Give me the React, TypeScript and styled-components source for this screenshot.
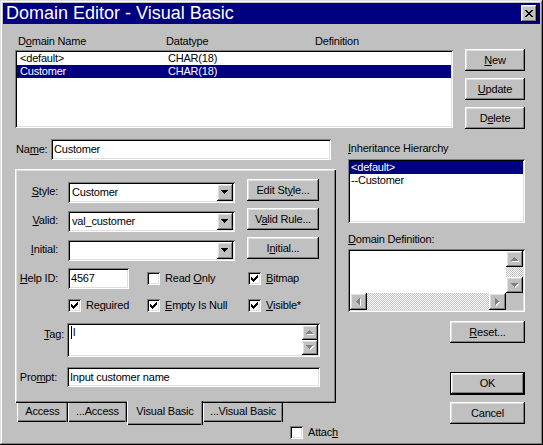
import React from 'react';
import styled, { createGlobalStyle, css } from 'styled-components';

const GlobalStyle = createGlobalStyle`
  html, body { margin: 0; padding: 0; background: #c0c0c0; }
  body {
    font-family: "Liberation Sans", Arial, sans-serif;
    font-size: 11px;
    letter-spacing: -0.2px;
    color: #000;
  }
  * { box-sizing: border-box; }
  u { text-decoration-thickness: 1px; text-underline-offset: 1px; }
`;

const raised = css`
  background: #c0c0c0;
  box-shadow: inset -1px -1px #000, inset 1px 1px #fff, inset -2px -2px #808080, inset 2px 2px #dfdfdf;
`;

const sunken = css`
  box-shadow: inset 1px 1px #808080, inset -1px -1px #fff, inset 2px 2px #000, inset -2px -2px #dfdfdf;
`;

const Window = styled.div`
  width: 543px;
  height: 445px;
  padding: 3px;
  background: #c0c0c0;
  box-shadow: inset -1px -1px #000, inset 1px 1px #dfdfdf, inset -2px -2px #808080, inset 2px 2px #fff;
  display: flex;
  flex-direction: column;
  overflow: hidden;
`;

const TitleBar = styled.div`
  height: 21px;
  flex: none;
  background: #000080;
  color: #fff;
  display: flex;
  align-items: center;
  padding: 0 3px;
  font-size: 18px;
  letter-spacing: 0;
  line-height: 21px;
  white-space: nowrap;
`;

const CloseBtn = styled.div`
  ${raised};
  margin-left: auto;
  width: 16px;
  height: 17px;
  display: flex;
  align-items: center;
  justify-content: center;
`;

const Body = styled.div`
  flex: 1;
  display: flex;
  flex-direction: column;
  padding: 11px 0 0 12px;
`;

const TopSection = styled.div`
  display: flex;
  gap: 12px;
`;

const ListColumn = styled.div`
  width: 438px;
  display: flex;
  flex-direction: column;
  gap: 2px;
`;

const columns = css`
  display: grid;
  grid-template-columns: 148px 149px 1fr;
  padding-left: 3px;
  height: 13px;
  line-height: 13px;
  white-space: nowrap;
`;

const HeaderRow = styled.div`
  ${columns};
`;

const ListBox = styled.div<{ $w: number; $h: number }>`
  ${sunken};
  width: ${p => p.$w}px;
  height: ${p => p.$h}px;
  background: #fff;
  padding: 2px;
  display: flex;
  flex-direction: column;
  flex: none;
`;

const DomainRow = styled.div<{ $selected?: boolean }>`
  ${columns};
  background: ${p => (p.$selected ? '#000080' : 'transparent')};
  color: ${p => (p.$selected ? '#fff' : '#000')};
`;

const TreeRow = styled.div<{ $selected?: boolean }>`
  height: 13px;
  line-height: 13px;
  padding-left: 1px;
  white-space: nowrap;
  background: ${p => (p.$selected ? '#000080' : 'transparent')};
  color: ${p => (p.$selected ? '#fff' : '#000')};
`;

const ButtonColumn = styled.div`
  padding-top: 14px;
  display: flex;
  flex-direction: column;
  gap: 7px;
`;

const Button = styled.button<{ $w: number; $h?: number; $default?: boolean; $ml?: number; $mt?: number }>`
  ${raised};
  width: ${p => p.$w}px;
  height: ${p => p.$h ?? 22}px;
  margin-left: ${p => p.$ml ?? 0}px;
  margin-top: ${p => p.$mt ?? 0}px;
  border: 0;
  padding: 0;
  font: inherit;
  letter-spacing: inherit;
  color: #000;
  line-height: 13px;
  flex: none;
  white-space: nowrap;
  ${p =>
    p.$default &&
    css`
      box-shadow: inset 0 0 0 1px #000, inset -2px -2px #000, inset 2px 2px #fff, inset -3px -3px #808080,
        inset 3px 3px #dfdfdf;
    `}
`;

const LowerSection = styled.div`
  margin-top: 10px;
  display: flex;
  gap: 12px;
`;

const LeftColumn = styled.div`
  width: 321px;
  display: flex;
  flex-direction: column;
`;

const RightColumn = styled.div`
  width: 177px;
  display: flex;
  flex-direction: column;
  align-items: flex-start;
  padding-top: 3px;
`;

const NameRow = styled.div`
  display: flex;
  align-items: center;
  height: 21px;
`;

const Label = styled.label<{ $w: number; $gap?: number; $left?: boolean; $top?: number }>`
  width: ${p => p.$w}px;
  margin-right: ${p => p.$gap ?? 0}px;
  text-align: ${p => (p.$left ? 'left' : 'right')};
  padding-left: ${p => (p.$left ? 1 : 0)}px;
  padding-top: ${p => p.$top ?? 0}px;
  flex: none;
  white-space: nowrap;
  line-height: 13px;
`;

const TextField = styled.div<{ $w: number; $h?: number }>`
  ${sunken};
  width: ${p => p.$w}px;
  height: ${p => p.$h ?? 21}px;
  line-height: ${p => (p.$h ?? 21) - 4}px;
  background: #fff;
  padding: 2px 2px 2px 3px;
  white-space: nowrap;
  overflow: hidden;
  flex: none;
`;

const Combo = styled.div`
  ${sunken};
  width: 167px;
  height: 21px;
  margin-top: 3px;
  background: #fff;
  padding: 2px;
  display: flex;
  flex: none;
`;

const ComboText = styled.span`
  flex: 1;
  padding-left: 2px;
  line-height: 17px;
  white-space: nowrap;
`;

const ScrollButton = styled.span<{ $w: number; $h: number }>`
  ${raised};
  width: ${p => p.$w}px;
  height: ${p => p.$h}px;
  display: flex;
  align-items: center;
  justify-content: center;
  flex: none;
`;

const Panel = styled.div`
  margin-top: 9px;
  height: 234px;
  background: #c0c0c0;
  box-shadow: inset 1px 1px #fff, inset -1px -1px #000, inset -2px -2px #808080, inset 2px 2px #dfdfdf;
  padding-top: 10px;
  display: flex;
  flex-direction: column;
`;

const FormRow = styled.div<{ $h: number; $mt?: number; $center?: boolean; $pl?: number }>`
  display: flex;
  align-items: ${p => (p.$center ? 'center' : 'flex-start')};
  height: ${p => p.$h}px;
  margin-top: ${p => p.$mt ?? 0}px;
  padding-left: ${p => p.$pl ?? 0}px;
  flex: none;
`;

const CheckItem = styled.div<{ $w?: number; $ml?: number }>`
  display: flex;
  align-items: center;
  gap: 5px;
  width: ${p => (p.$w ? `${p.$w}px` : 'auto')};
  margin-left: ${p => p.$ml ?? 0}px;
  height: 13px;
  line-height: 13px;
  white-space: nowrap;
  flex: none;
`;

const CheckBox = styled.span`
  ${sunken};
  width: 13px;
  height: 13px;
  background: #fff;
  display: flex;
  align-items: center;
  justify-content: center;
  flex: none;
`;

const TagBox = styled.div`
  ${sunken};
  width: 253px;
  height: 34px;
  padding: 2px;
  background: #fff;
  display: grid;
  grid-template-columns: 1fr 16px;
  flex: none;
`;

const TagText = styled.div`
  padding: 1px 0 0 2px;
  line-height: 13px;
  display: flex;
  align-items: flex-start;
`;

const Caret = styled.span`
  width: 1px;
  height: 13px;
  background: #000;
  margin-right: 1px;
`;

const VScroll = styled.div`
  display: flex;
  flex-direction: column;
`;

const HScroll = styled.div`
  display: flex;
`;

const Track = styled.div`
  flex: 1;
  background-color: #fff;
  background-image: repeating-conic-gradient(#c0c0c0 0 25%, #fff 0 50%);
  background-size: 2px 2px;
`;

const ScrollBox = styled.div`
  ${sunken};
  width: 177px;
  height: 63px;
  padding: 2px;
  background: #fff;
  display: grid;
  grid-template-columns: 1fr 17px;
  grid-template-rows: 1fr 17px;
  flex: none;
`;

const Corner = styled.div`
  background: #c0c0c0;
`;

const Caption = styled.div<{ $mt?: number; $mb?: number }>`
  height: 13px;
  line-height: 13px;
  margin-top: ${p => p.$mt ?? 0}px;
  margin-bottom: ${p => p.$mb ?? 0}px;
  white-space: nowrap;
`;

const TabStrip = styled.div`
  display: flex;
  align-items: flex-start;
  margin-top: -2px;
  padding-left: 2px;
  height: 24px;
`;

const Tab = styled.div<{ $w: number; $active?: boolean }>`
  width: ${p => p.$w}px;
  height: ${p => (p.$active ? 24 : 19)}px;
  margin-top: ${p => (p.$active ? 0 : 2)}px;
  padding-bottom: ${p => (p.$active ? 3 : 2)}px;
  background: #c0c0c0;
  display: flex;
  align-items: center;
  justify-content: center;
  line-height: 13px;
  white-space: nowrap;
  box-shadow: inset 1px 0 #fff, inset -1px 0 #000, inset -2px 0 #808080, inset 0 -1px #000, inset 0 -2px #808080;
  flex: none;
`;

const AttachRow = styled.div`
  margin-top: 1px;
  padding-left: 275px;
`;

type Dir = 'up' | 'down' | 'left' | 'right';

const arrowPaths: Record<Dir, string> = {
  down: 'M0 0h7v1H0zM1 1h5v1H1zM2 2h3v1H2zM3 3h1v1H3z',
  up: 'M3 0h1v1H3zM2 1h3v1H2zM1 2h5v1H1zM0 3h7v1H0z',
  left: 'M3 0h1v7H3zM2 1h1v5H2zM1 2h1v3H1zM0 3h1v1H0z',
  right: 'M0 0h1v7H0zM1 1h1v5H1zM2 2h1v3H2zM3 3h1v1H3z',
};

const Arrow = ({ dir, disabled }: { dir: Dir; disabled?: boolean }) => {
  const horizontal = dir === 'left' || dir === 'right';
  const w = horizontal ? 4 : 7;
  const h = horizontal ? 7 : 4;
  return (
    <svg width={w + 1} height={h + 1} viewBox={`0 0 ${w + 1} ${h + 1}`} shapeRendering="crispEdges" style={{ display: 'block' }}>
      {disabled && <path d={arrowPaths[dir]} fill="#fff" transform="translate(1 1)" />}
      <path d={arrowPaths[dir]} fill={disabled ? '#808080' : '#000'} />
    </svg>
  );
};

const Check = ({ checked }: { checked?: boolean }) => (
  <CheckBox>
    {checked && (
      <svg width="7" height="7" viewBox="0 0 7 7" shapeRendering="crispEdges" style={{ display: 'block' }}>
        <path d="M6 0h1v1H6zM5 1h2v1H5zM0 2h1v1H0zM4 2h3v1H4zM0 3h2v1H0zM3 3h3v1H3zM0 4h5v1H0zM1 5h3v1H1zM2 6h1v1H2z" fill="#000" />
      </svg>
    )}
  </CheckBox>
);

const ComboBox = ({ value }: { value: string }) => (
  <Combo>
    <ComboText>{value}</ComboText>
    <ScrollButton $w={16} $h={17}>
      <Arrow dir="down" />
    </ScrollButton>
  </Combo>
);

const App = () => {
  return (
    <>
      <GlobalStyle />
      <Window>
        <TitleBar>
          Domain Editor - Visual Basic
          <CloseBtn>
            <svg width="8" height="7" viewBox="0 0 8 7" shapeRendering="crispEdges" style={{ display: 'block' }}>
              <path
                d="M0 0h2v1H0zM6 0h2v1H6zM1 1h2v1H1zM5 1h2v1H5zM2 2h4v1H2zM3 3h2v1H3zM2 4h4v1H2zM1 5h2v1H1zM5 5h2v1H5zM0 6h2v1H0zM6 6h2v1H6z"
                fill="#000"
              />
            </svg>
          </CloseBtn>
        </TitleBar>

        <Body>
          <TopSection>
            <ListColumn>
              <HeaderRow>
                <span>D<u>o</u>main Name</span>
                <span>Datatype</span>
                <span>Definition</span>
              </HeaderRow>
              <ListBox $w={438} $h={78}>
                <DomainRow>
                  <span>{'<default>'}</span>
                  <span>CHAR(18)</span>
                  <span />
                </DomainRow>
                <DomainRow $selected>
                  <span>Customer</span>
                  <span>CHAR(18)</span>
                  <span />
                </DomainRow>
              </ListBox>
            </ListColumn>
            <ButtonColumn>
              <Button $w={60}><u>N</u>ew</Button>
              <Button $w={60}><u>U</u>pdate</Button>
              <Button $w={60}>D<u>e</u>lete</Button>
            </ButtonColumn>
          </TopSection>

          <LowerSection>
            <LeftColumn>
              <NameRow>
                <Label $w={36} $left>Na<u>m</u>e:</Label>
                <TextField $w={280}>Customer</TextField>
              </NameRow>

              <Panel>
                <FormRow $h={29}>
                  <Label $w={43} $gap={10} $top={6}><u>S</u>tyle:</Label>
                  <ComboBox value="Customer" />
                  <Button $w={72} $ml={12}>Edit St<u>y</u>le...</Button>
                </FormRow>
                <FormRow $h={29}>
                  <Label $w={43} $gap={10} $top={6}><u>V</u>alid:</Label>
                  <ComboBox value="val_customer" />
                  <Button $w={72} $ml={12}>V<u>a</u>lid Rule...</Button>
                </FormRow>
                <FormRow $h={29}>
                  <Label $w={43} $gap={10} $top={6}><u>I</u>nitial:</Label>
                  <ComboBox value="" />
                  <Button $w={72} $ml={12}>I<u>n</u>itial...</Button>
                </FormRow>
                <FormRow $h={21} $mt={2} $center>
                  <Label $w={43} $gap={10}><u>H</u>elp ID:</Label>
                  <TextField $w={61}>4567</TextField>
                  <CheckItem $w={101} $ml={18}>
                    <Check />
                    <span>Read <u>O</u>nly</span>
                  </CheckItem>
                  <CheckItem>
                    <Check checked />
                    <span><u>B</u>itmap</span>
                  </CheckItem>
                </FormRow>
                <FormRow $h={13} $mt={10} $pl={53}>
                  <CheckItem $w={79}>
                    <Check checked />
                    <span>Re<u>q</u>uired</span>
                  </CheckItem>
                  <CheckItem $w={101}>
                    <Check checked />
                    <span><u>E</u>mpty Is Null</span>
                  </CheckItem>
                  <CheckItem>
                    <Check checked />
                    <span><u>V</u>isible*</span>
                  </CheckItem>
                </FormRow>
                <FormRow $h={34} $mt={11}>
                  <Label $w={49} $gap={3} $top={5}><u>T</u>ag:</Label>
                  <TagBox>
                    <TagText>
                      <Caret />l
                    </TagText>
                    <VScroll>
                      <ScrollButton $w={16} $h={15}>
                        <Arrow dir="up" disabled />
                      </ScrollButton>
                      <ScrollButton $w={16} $h={15}>
                        <Arrow dir="down" disabled />
                      </ScrollButton>
                    </VScroll>
                  </TagBox>
                </FormRow>
                <FormRow $h={20} $mt={10} $center>
                  <Label $w={42} $gap={10}>Pro<u>m</u>pt:</Label>
                  <TextField $w={253} $h={20}>Input customer name</TextField>
                </FormRow>
              </Panel>

              <TabStrip>
                <Tab $w={51}>Access</Tab>
                <Tab $w={59}>...Access</Tab>
                <Tab $w={76} $active>Visual Basic</Tab>
                <Tab $w={80}>...Visual Basic</Tab>
              </TabStrip>

              <AttachRow>
                <CheckItem>
                  <Check />
                  <span>Attac<u>h</u></span>
                </CheckItem>
              </AttachRow>
            </LeftColumn>

            <RightColumn>
              <Caption $mb={4}><u>I</u>nheritance Hierarchy</Caption>
              <ListBox $w={177} $h={64}>
                <TreeRow $selected>{'<default>'}</TreeRow>
                <TreeRow>--Customer</TreeRow>
              </ListBox>

              <Caption $mt={10} $mb={3}><u>D</u>omain Definition:</Caption>
              <ScrollBox>
                <div />
                <VScroll>
                  <ScrollButton $w={17} $h={16}>
                    <Arrow dir="up" disabled />
                  </ScrollButton>
                  <Track />
                  <ScrollButton $w={17} $h={16}>
                    <Arrow dir="down" disabled />
                  </ScrollButton>
                </VScroll>
                <HScroll>
                  <ScrollButton $w={17} $h={17}>
                    <Arrow dir="left" disabled />
                  </ScrollButton>
                  <Track />
                  <ScrollButton $w={17} $h={17}>
                    <Arrow dir="right" disabled />
                  </ScrollButton>
                </HScroll>
                <Corner />
              </ScrollBox>

              <Button $w={75} $ml={102} $mt={9}><u>R</u>eset...</Button>
              <Button $w={75} $h={23} $ml={102} $mt={29} $default>OK</Button>
              <Button $w={75} $ml={102} $mt={7}>Cancel</Button>
            </RightColumn>
          </LowerSection>
        </Body>
      </Window>
    </>
  );
};

export default App;
